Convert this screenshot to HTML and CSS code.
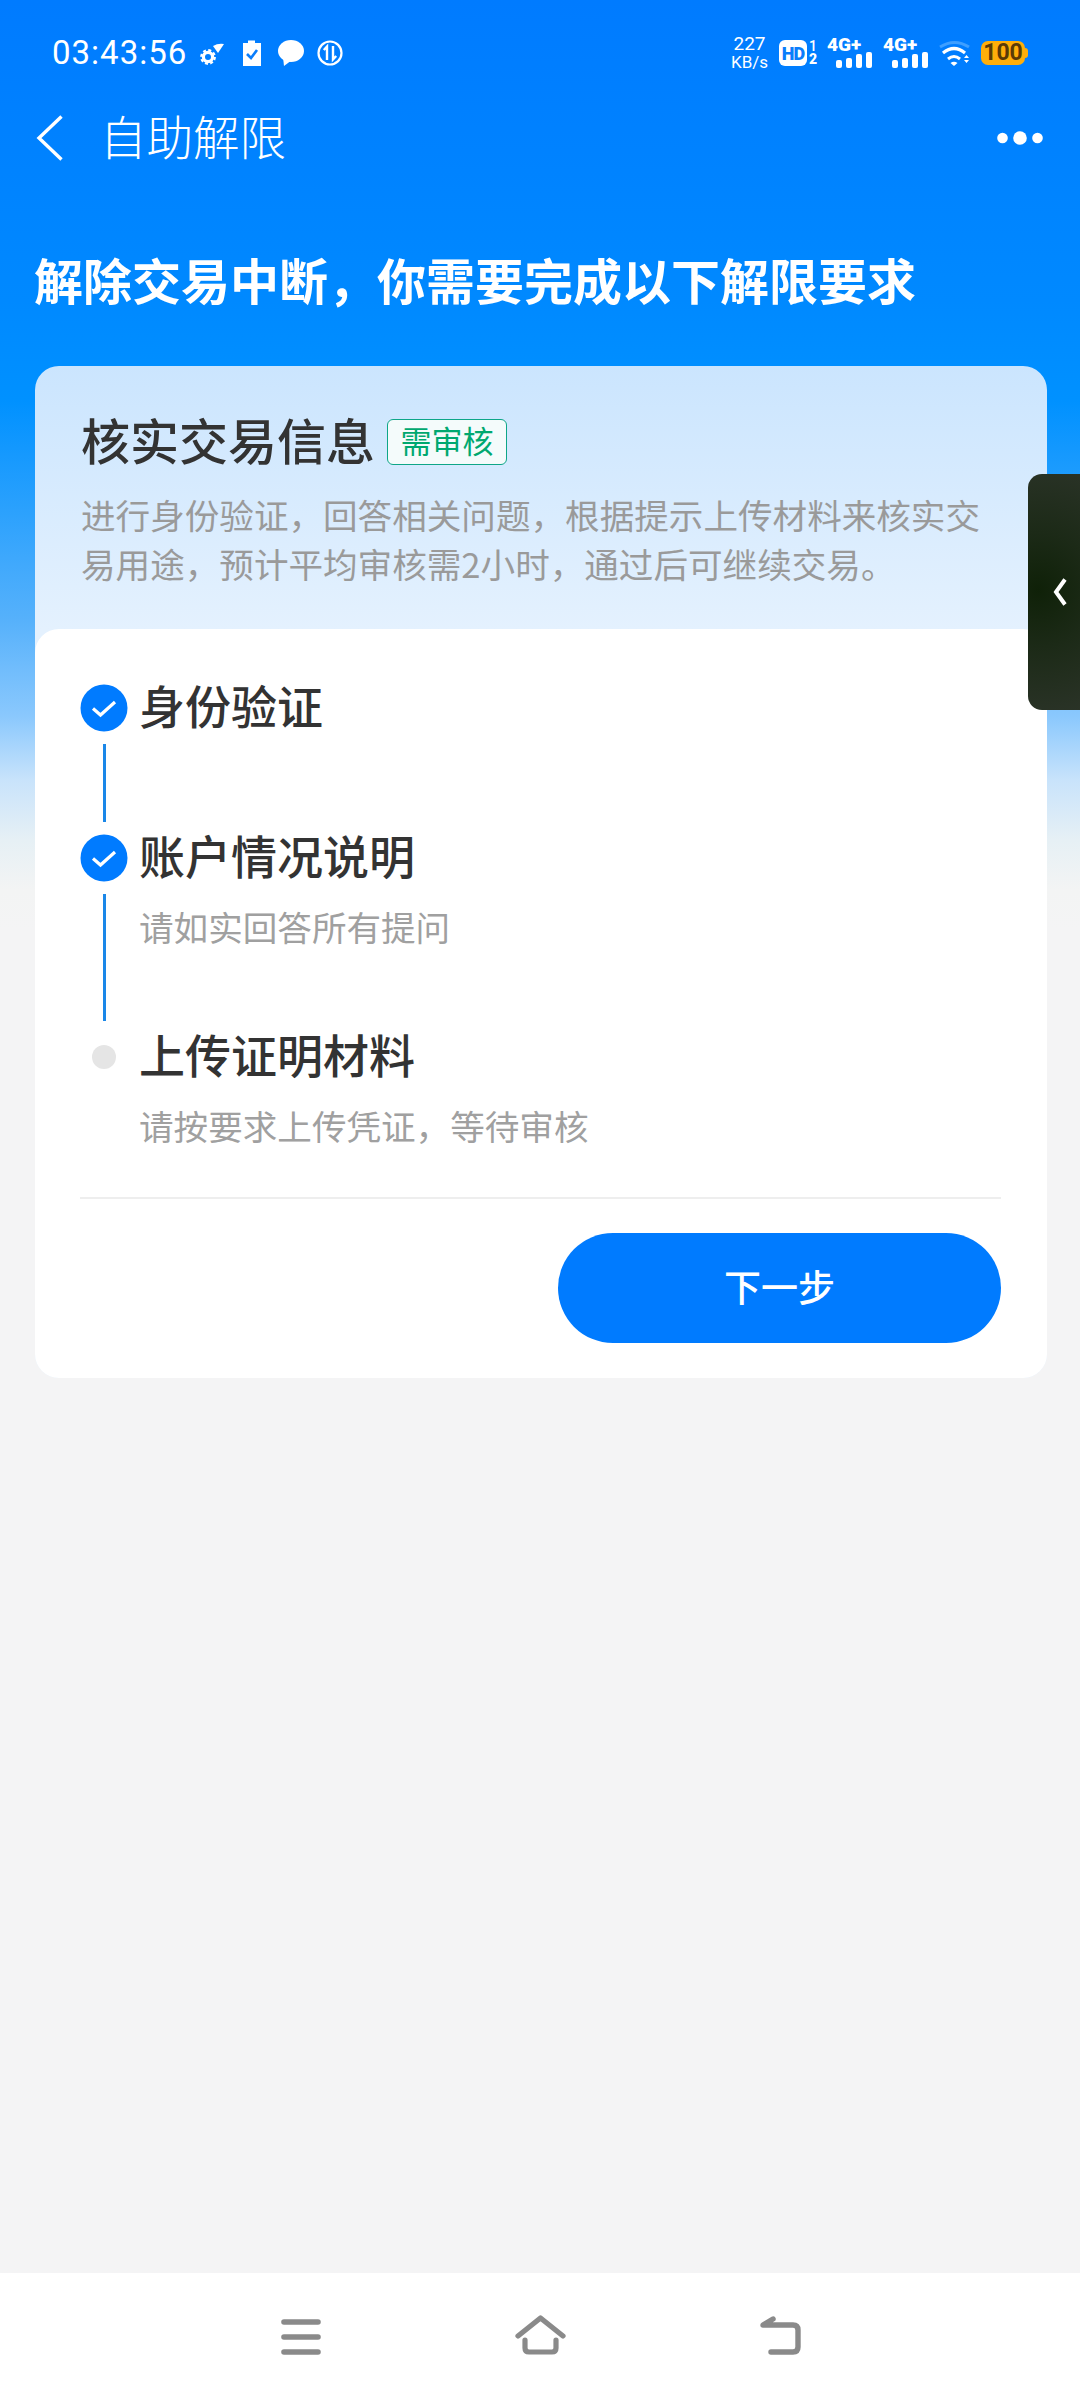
FILE: index.html
```html
<!DOCTYPE html>
<html lang="zh-CN">
<head>
    <meta charset="UTF-8">
    <meta name="viewport" content="width=device-width, initial-scale=1.0">
    <title>自助解限</title>
    <link rel="stylesheet" href="styles.css">
</head>

<body>

<div class="screen">
    <!-- Status bar -->
    <div class="status-bar">
        <div class="status-left">
            <span class="clock">03:43:56</span>
            <svg width="30" height="26" viewBox="0 0 30 26">
                <circle cx="12" cy="17" r="4.6" fill="none" stroke="#fff" stroke-width="3.2"/>
                <circle cx="12" cy="17" r="6.8" fill="none" stroke="#fff" stroke-width="2.2" stroke-dasharray="3 2.35"/>
                <path d="M17 6 Q22 3 28 4 L22 13 Z" fill="#fff"/>
            </svg>
            <svg width="20" height="26" viewBox="0 0 20 26">
                <path d="M1 3 H6 V0.5 H13 V3 H19 V26 H1 Z" fill="#fff"/>
                <path d="M5 14 L9 18 L15 10" fill="none" stroke="#0a7dfb" stroke-width="2.6"/>
            </svg>
            <svg width="26" height="26" viewBox="0 0 26 26">
                <ellipse cx="13" cy="11" rx="13" ry="11" fill="#fff"/>
                <path d="M5 17 L6 26 L14 20 Z" fill="#fff"/>
            </svg>
            <svg class="icon-data" width="26" height="26" viewBox="0 0 26 26">
                <circle cx="13" cy="13" r="11.5" fill="none" stroke="#fff" stroke-width="2.2"/>
                <path d="M10 20 V7 M6.8 10 L10 6.5 L10 10" fill="none" stroke="#fff" stroke-width="2.4"/>
                <path d="M16 6 V19 M19.2 16 L16 19.5 L16 16" fill="none" stroke="#fff" stroke-width="2.4"/>
            </svg>
        </div>
        <div class="status-right">
            <div class="speed"><span>227</span><span class="speed-unit">KB/s</span></div>
            <div class="hd">
                <span class="hd-box">HD</span>
                <span class="hd-nums"><span class="hd-one">1</span><span>2</span></span>
            </div>
            <div class="signal">
                <span class="signal-type">4G+</span>
                <svg width="36" height="16" viewBox="0 0 36 16" fill="#fff">
                    <rect x="0" y="8" width="6" height="8" rx="2"/>
                    <rect x="10" y="6" width="6" height="10" rx="2"/>
                    <rect x="20" y="2" width="6" height="14" rx="2"/>
                    <rect x="30" y="0" width="6" height="16" rx="2"/>
                </svg>
            </div>
            <div class="signal">
                <span class="signal-type">4G+</span>
                <svg width="36" height="16" viewBox="0 0 36 16" fill="#fff">
                    <rect x="0" y="8" width="6" height="8" rx="2"/>
                    <rect x="10" y="6" width="6" height="10" rx="2"/>
                    <rect x="20" y="2" width="6" height="14" rx="2"/>
                    <rect x="30" y="0" width="6" height="16" rx="2"/>
                </svg>
            </div>
            <svg width="31" height="26" viewBox="0 0 31 26">
                <path d="M1 7 Q15.5 -2 30 7" fill="none" stroke="#3f9fff" stroke-width="3"/>
                <path d="M4 13 Q15 4 26 13" fill="none" stroke="#fff" stroke-width="3.2"/>
                <path d="M9 19 Q15 14 21 19" fill="none" stroke="#fff" stroke-width="3"/>
                <path d="M11.5 23 Q15 20.5 18.5 23 L15 26 Z" fill="#fff"/>
                <path d="M25 18 L27.5 15 L30 18 Z M25 20 H30 L27.5 23 Z" fill="#fff"/>
            </svg>
            <div class="battery">100</div>
        </div>
    </div>

    <!-- Title bar -->
    <div class="top-nav">
        <svg width="27" height="46" viewBox="0 0 27 46">
            <path d="M25.5 1.5 L3 23 L25.5 44.5" fill="none" stroke="#fff" stroke-width="3.4"/>
        </svg>
        <span class="nav-title">自助解限</span>
        <svg class="nav-more" width="46" height="14" viewBox="0 0 46 14" fill="#fff">
            <circle cx="5.5" cy="7" r="5.3"/>
            <circle cx="23" cy="7" r="6.8"/>
            <circle cx="40.5" cy="7" r="5.3"/>
        </svg>
    </div>

    <h1 class="headline">解除交易中断，你需要完成以下解限要求</h1>

    <div class="card">
        <div class="card-head">
            <div class="card-title-row">
                <h2 class="card-title">核实交易信息</h2>
                <span class="badge">需审核</span>
            </div>
            <p class="card-desc">进行身份验证，回答相关问题，根据提示上传材料来核实交易用途，预计平均审核需2小时，通过后可继续交易。</p>
        </div>

        <div class="card-body">
            <ol class="steps">
                <li class="step step-short">
                    <div class="step-rail">
                        <svg class="step-mark" width="48" height="48" viewBox="0 0 48 48">
                            <circle cx="24" cy="24" r="23.5" fill="#007bff"/>
                            <path d="M13 24.5 L20.5 31 L35 18" fill="none" stroke="#fff" stroke-width="3.2"/>
                        </svg>
                        <span class="step-line"></span>
                    </div>
                    <div class="step-text">
                        <div class="step-title">身份验证</div>
                    </div>
                </li>
                <li class="step step-tall">
                    <div class="step-rail">
                        <svg class="step-mark" width="48" height="48" viewBox="0 0 48 48">
                            <circle cx="24" cy="24" r="23.5" fill="#007bff"/>
                            <path d="M13 24.5 L20.5 31 L35 18" fill="none" stroke="#fff" stroke-width="3.2"/>
                        </svg>
                        <span class="step-line"></span>
                    </div>
                    <div class="step-text">
                        <div class="step-title">账户情况说明</div>
                        <div class="step-sub">请如实回答所有提问</div>
                    </div>
                </li>
                <li class="step">
                    <div class="step-rail">
                        <span class="step-dot"></span>
                    </div>
                    <div class="step-text">
                        <div class="step-title">上传证明材料</div>
                        <div class="step-sub">请按要求上传凭证，等待审核</div>
                    </div>
                </li>
            </ol>
            <div class="card-actions">
                <button class="next-btn" type="button">下一步</button>
            </div>
        </div>
    </div>

    <div class="spacer"></div>

    <!-- System navigation -->
    <div class="nav-bar">
        <div class="nav-key">
            <svg width="60" height="50" viewBox="0 0 60 50" fill="none" stroke="#8a8a8a" stroke-width="5.6" stroke-linecap="round">
                <path d="M13 10 H47 M13 25 H47 M13 40 H47"/>
            </svg>
        </div>
        <div class="nav-key">
            <svg width="60" height="50" viewBox="0 0 60 50" fill="none" stroke="#8a8a8a" stroke-width="5.2" stroke-linecap="round" stroke-linejoin="round">
                <path d="M7 24 L29.5 6 L52 24"/>
                <path d="M14 28 V36 Q14 40 18 40 H41 Q45 40 45 36 V28"/>
            </svg>
        </div>
        <div class="nav-key">
            <svg width="60" height="50" viewBox="0 0 60 50" fill="none" stroke="#8a8a8a" stroke-width="5.4" stroke-linecap="round" stroke-linejoin="round">
                <path d="M20 40 H42 Q47 40 47 35 V18 Q47 13 42 13 H12 L22 7"/>
            </svg>
        </div>
    </div>

    <!-- Floating edge tab -->
    <div class="side-tab">
        <svg width="16" height="30" viewBox="0 0 16 30">
            <path d="M13 2.5 L4 15 L13 27.5" fill="none" stroke="#fff" stroke-width="4"/>
        </svg>
    </div>
</div>

</body>
</html>
```

FILE: styles.css
```css
* {
    box-sizing: border-box;
}
body {
    margin: 0;
    font-family: "Noto Sans CJK SC", "Noto Sans", sans-serif;
    color: #333;
}
svg {
    display: block;
    flex: none;
}
.screen {
    position: relative;
    display: flex;
    flex-direction: column;
    width: 1080px;
    height: 2400px;
    overflow: hidden;
    background: linear-gradient(180deg, #007bff 0, #0089ff 300px, #0091ff 400px, #56b1fb 620px, #8ac8fd 716px, #c8e3fb 780px, #e6f0f5 840px, #f3f4f4 890px, #f4f4f5 930px);
}

/* Status bar */
.status-bar {
    display: flex;
    justify-content: space-between;
    align-items: center;
    height: 104px;
    padding: 2px 52px 0;
    color: #fff;
    flex: none;
}
.status-left, .status-right {
    display: flex;
    align-items: center;
}
.status-left {
    gap: 16px;
}
.status-right {
    gap: 11px;
}
.clock {
    width: 128px;
    margin-top: -2px;
    font-family: Roboto, sans-serif;
    font-size: 33px;
    letter-spacing: 1px;
    white-space: nowrap;
}
.icon-data {
    margin-left: -3px;
}
.speed {
    display: flex;
    flex-direction: column;
    width: 37px;
    font-family: Roboto, sans-serif;
    font-size: 19px;
    line-height: 18px;
    text-align: center;
}
.speed-unit {
    font-size: 17px;
}
.hd {
    display: flex;
    width: 37px;
    height: 26px;
    font-family: Roboto, sans-serif;
    font-weight: 900;
}
.hd-box {
    display: flex;
    justify-content: center;
    align-items: center;
    flex: none;
    width: 28px;
    height: 26px;
    border-radius: 6px;
    background: #fff;
    color: #0a7dfb;
    font-size: 18px;
    letter-spacing: -1px;
}
.hd-nums {
    display: flex;
    flex-direction: column;
    justify-content: space-between;
    margin-left: 2px;
    font-size: 14px;
    line-height: 13px;
}
.hd-one {
    font-weight: 500;
}
.signal {
    display: flex;
    flex-direction: column;
    align-items: flex-end;
    width: 45px;
    height: 30px;
}
.signal-type {
    align-self: flex-start;
    height: 14px;
    font-family: Roboto, sans-serif;
    font-weight: 900;
    font-size: 19px;
    line-height: 14px;
    white-space: nowrap;
}
.battery {
    position: relative;
    width: 44px;
    height: 24px;
    margin-right: 3px;
    border-radius: 7px;
    background: #ffae0a;
    color: #5b3a06;
    font-family: Roboto, sans-serif;
    font-weight: bold;
    font-size: 23px;
    line-height: 24px;
    text-align: center;
}
.battery::after {
    content: "";
    position: absolute;
    top: 7px;
    right: -3px;
    width: 3px;
    height: 10px;
    border-radius: 0 3px 3px 0;
    background: #ffae0a;
}

/* Title bar */
.top-nav {
    display: flex;
    align-items: center;
    height: 68px;
    padding: 0 37px 0 36px;
    color: #fff;
    flex: none;
}
.nav-title {
    height: 68px;
    margin-left: 37px;
    font-size: 46.5px;
    font-weight: 300;
    line-height: 62px;
}
.nav-more {
    margin-left: auto;
}
.headline {
    margin: 77px 0 57px 34px;
    color: #fff;
    font-size: 49px;
    font-weight: 700;
    line-height: 60px;
    white-space: nowrap;
    flex: none;
}

/* Card */
.card {
    margin: 0 33px 0 35px;
    border-radius: 24px;
    overflow: hidden;
    background: linear-gradient(180deg, #cbe5fe 0, #e4f1fe 263px);
    flex: none;
}
.card-head {
    padding: 48px 46px 42px;
}
.card-title-row {
    display: flex;
    align-items: center;
    gap: 12px;
    height: 56px;
}
.card-title {
    height: 56px;
    margin: 0;
    color: #333;
    font-size: 49px;
    font-weight: 500;
    line-height: 50px;
    white-space: nowrap;
}
.badge {
    width: 120px;
    height: 46px;
    border: 1.5px solid #0ea688;
    border-radius: 6px;
    background: #f4fbfb;
    color: #00a870;
    font-size: 31px;
    line-height: 40px;
    text-align: center;
    white-space: nowrap;
}
.card-desc {
    margin: 20px 0 0;
    color: #9a9a9a;
    font-size: 34.6px;
    line-height: 48.5px;
}
.card-body {
    padding: 55px 46px 35px 45px;
    border-radius: 24px 24px 0 0;
    background: #fff;
}

/* Steps */
.steps {
    margin: 0;
    padding: 0 0 48px;
    list-style: none;
    border-bottom: 2px solid #eeeeee;
}
.step {
    display: flex;
    gap: 11px;
}
.step-short {
    height: 150px;
}
.step-tall {
    height: 199px;
}
.step-rail {
    display: flex;
    flex-direction: column;
    align-items: center;
    width: 48px;
    flex: none;
}
.step-line {
    flex: 1;
    width: 3px;
    margin: 12px 0;
    background: #1a87e8;
}
.step-dot {
    width: 24px;
    height: 24px;
    margin-top: 12px;
    border-radius: 50%;
    background: #e5e5e5;
}
.step-title {
    height: 48px;
    color: #333;
    font-size: 46px;
    font-weight: 500;
    line-height: 41px;
    white-space: nowrap;
}
.step-sub {
    margin-top: 20px;
    color: #a0a0a0;
    font-size: 34.6px;
    line-height: 48px;
    white-space: nowrap;
}

/* Button */
.card-actions {
    display: flex;
    justify-content: flex-end;
    padding-top: 34px;
}
.next-btn {
    width: 443px;
    height: 110px;
    padding-bottom: 6px;
    border: none;
    border-radius: 55px;
    background: #007bff;
    color: #fff;
    font-family: inherit;
    font-size: 37px;
    font-weight: 500;
}

.spacer {
    flex: 1;
}

/* System navigation */
.nav-bar {
    display: flex;
    justify-content: center;
    align-items: center;
    height: 127px;
    padding-left: 2px;
    background: #fff;
    flex: none;
}
.nav-key {
    display: flex;
    justify-content: center;
    width: 240px;
}

/* Floating edge tab */
.side-tab {
    position: absolute;
    top: 474px;
    left: 1028px;
    display: flex;
    align-items: center;
    width: 52px;
    height: 236px;
    padding-left: 24px;
    border-radius: 14px 0 0 14px;
    background: radial-gradient(circle at 10px 116px, #0f2108 0, #1c2a17 45%, #2a3327 100%);
}
```
